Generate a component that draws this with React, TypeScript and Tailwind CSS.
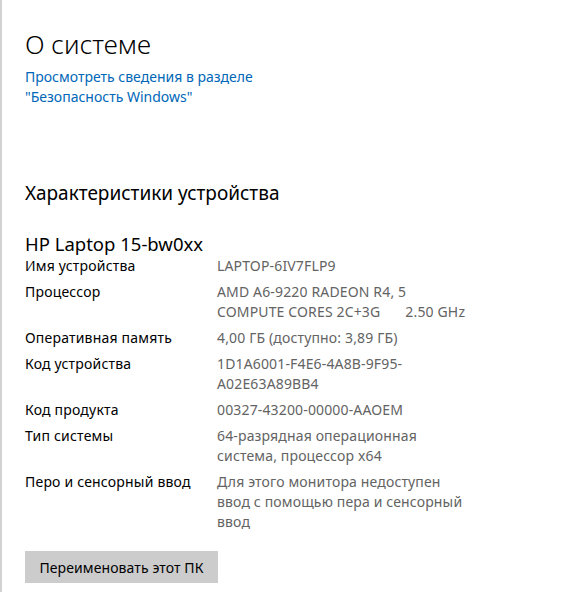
const rows: { label: string; value: React.ReactNode }[] = [
  { label: "Имя устройства", value: "LAPTOP-6IV7FLP9" },
  {
    label: "Процессор",
    value: (
      <>
        AMD A6-9220 RADEON R4, 5
        <br />
        COMPUTE CORES 2C+3G<span className="ml-[25px]">2.50 GHz</span>
      </>
    ),
  },
  { label: "Оперативная память", value: "4,00 ГБ (доступно: 3,89 ГБ)" },
  {
    label: "Код устройства",
    value: (
      <>
        1D1A6001-F4E6-4A8B-9F95-
        <br />
        A02E63A89BB4
      </>
    ),
  },
  { label: "Код продукта", value: "00327-43200-00000-AAOEM" },
  {
    label: "Тип системы",
    value: (
      <>
        64-разрядная операционная
        <br />
        система, процессор x64
      </>
    ),
  },
  {
    label: "Перо и сенсорный ввод",
    value: (
      <>
        Для этого монитора недоступен
        <br />
        ввод с помощью пера и сенсорный
        <br />
        ввод
      </>
    ),
  },
];

export default function App() {
  return (
    <div
      className="w-[584px] h-[592px] bg-white border-l-2 border-[#d2d2d2] pl-[23px] pt-[26px] overflow-hidden"
      style={{ fontFamily: '"Noto Sans", "Segoe UI", sans-serif' }}
    >
      <h1 className="text-[26px] leading-[36px] font-light text-black">О системе</h1>

      <div className="mt-[5px] text-[14px] leading-[20px] text-[#0067b8]">
        <a className="cursor-pointer hover:underline">
          Просмотреть сведения в разделе
          <br />
          "Безопасность Windows"
        </a>
      </div>

      <h2 className="mt-[72px] text-[19px] leading-[28px] text-black">
        Характеристики устройства
      </h2>

      <div className="mt-[25px] text-[18.5px] leading-[24px] text-black">HP Laptop 15-bw0xx</div>

      <div className="flex flex-col gap-[6px] text-[14px] leading-[20px]">
        {rows.map((r) => (
          <div key={r.label} className="flex">
            <div className="w-[192px] shrink-0 text-black tracking-[0.2px]">{r.label}</div>
            <div className="text-[#636363] tracking-[0.15px]">{r.value}</div>
          </div>
        ))}
      </div>

      <button className="mt-[19px] w-[193px] h-[32px] bg-[#cccccc] text-[14px] text-black tracking-[0.1px]">
        Переименовать этот ПК
      </button>
    </div>
  );
}
